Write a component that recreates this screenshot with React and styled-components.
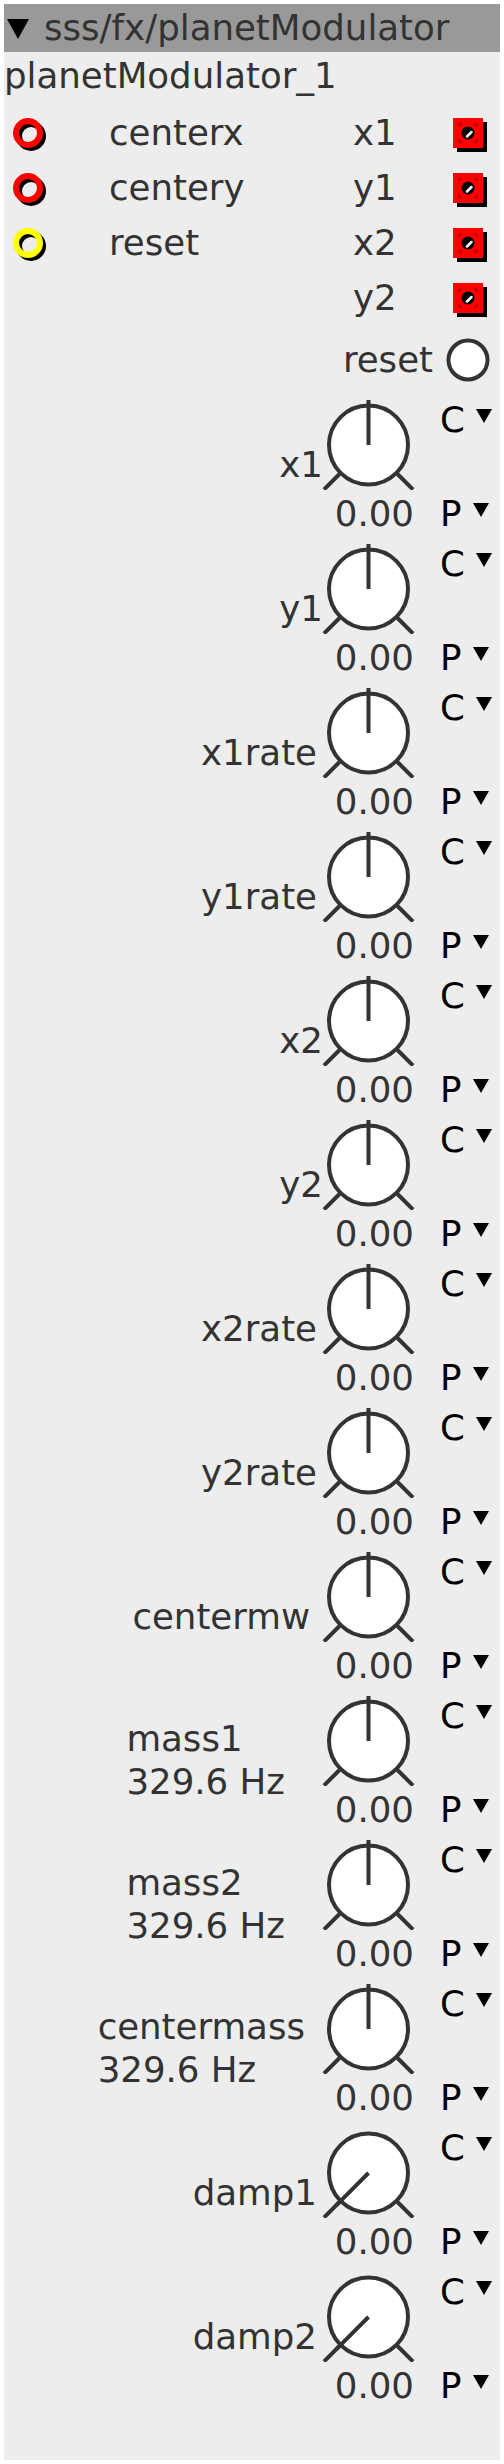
import React from "react";
import styled, { createGlobalStyle } from "styled-components";

const GlobalStyle = createGlobalStyle`
	body {
		margin: 4px;
		background: #ffffff;
		font-family: "DejaVu Sans", "Liberation Sans", sans-serif;
	}
`;

// Object panel
const Panel = styled.div`
	width: 496px;
	background: #ededed;
	color: #333333;
	font-size: 35.6px;
	padding-bottom: 44px;
`;

const Header = styled.div`
	height: 48px;
	display: flex;
	align-items: center;
	padding-left: 3px;
	background: #999999;
	line-height: 48px;
	white-space: nowrap;
`;

const Collapse = styled.svg`
	flex: none;
	margin-right: 15px;
`;

const InstanceName = styled.div`
	height: 48px;
	line-height: 48px;
	white-space: nowrap;
`;

// Inlets / outlets
const IoList = styled.div`
	padding-top: 5px;
`;

const IoRow = styled.div`
	display: grid;
	grid-template-columns: 96px 244px 100px 40px;
	align-items: center;
	height: 55px;
	padding-left: 9px;
	line-height: 40px;
`;

const JackIcon = styled.svg`
	display: block;
	margin-top: ${(p) => p.$drop}px;
`;

const ResetRow = styled.div`
	display: flex;
	justify-content: flex-end;
	align-items: center;
	gap: 13px;
	height: 70px;
	padding-right: 10px;
	line-height: 40px;
`;

// Knob rows
const KnobList = styled.div`
	padding-top: 5px;
`;

const KnobRow = styled.div`
	display: grid;
	grid-template-columns: 1fr 91px 78px;
	grid-template-rows: 90px 48px;
	padding: 0 8px 6px 0;
`;

const KnobLabel = styled.div`
	grid-column: 1;
	grid-row: 1 / 3;
	align-self: center;
	justify-self: end;
	padding: 0 ${(p) => p.$pad}px 10px 0;
	line-height: 43px;
	white-space: pre;
`;

const KnobSvg = styled.svg`
	grid-column: 2;
	grid-row: 1;
	display: block;
`;

const Value = styled.div`
	grid-column: 2;
	grid-row: 2;
	text-align: right;
	line-height: 48px;
`;

const Mode = styled.div`
	grid-column: 3;
	grid-row: ${(p) => p.$row};
	padding-left: 26px;
	color: #000000;
	line-height: ${(p) => (p.$row === 1 ? 40 : 48)}px;
	white-space: nowrap;
`;

const Caret = styled.svg`
	vertical-align: 9px;
`;

const Inlet = ({ color }) => (
	<JackIcon $drop={6} width="36" height="36" viewBox="0 0 36 36">
		<circle cx="18" cy="18" r="12" fill="none" stroke="#000" strokeWidth="6" />
		<circle cx="15" cy="15" r="12" fill="none" stroke={color} strokeWidth="6" />
	</JackIcon>
);

const Outlet = () => (
	<JackIcon $drop={4} width="34" height="34" viewBox="0 0 34 34">
		<rect x="4" y="4" width="30" height="30" fill="#000" />
		<rect x="0" y="0" width="30" height="30" fill="#ff0000" />
		<path
			d="M6 9V6h3M21 6h3v3M6 21v3h3M24 21v3h-3"
			fill="none"
			stroke="#7a0000"
			strokeWidth="1"
		/>
		<circle cx="15" cy="15" r="6.5" fill="#000" />
		<line x1="14" y1="18.5" x2="18.5" y2="14" stroke="#fff" strokeWidth="2.5" strokeLinecap="round" />
	</JackIcon>
);

const Knob = ({ angle }) => {
	const rad = (angle * Math.PI) / 180;
	const cx = 45.5;
	const cy = 45;
	const tick = (a, r) => {
		const t = (a * Math.PI) / 180;
		return [cx + r * Math.sin(t), cy - r * Math.cos(t)];
	};
	const [l1x, l1y] = tick(-135, 41);
	const [l2x, l2y] = tick(-135, 63);
	const [r1x, r1y] = tick(135, 41);
	const [r2x, r2y] = tick(135, 63);
	return (
		<KnobSvg width="91" height="90" viewBox="0 0 91 90">
			<line x1={l1x} y1={l1y} x2={l2x} y2={l2y} stroke="#333" strokeWidth="4" />
			<line x1={r1x} y1={r1y} x2={r2x} y2={r2y} stroke="#333" strokeWidth="4" />
			<circle cx={cx} cy={cy} r="39.5" fill="#fff" stroke="#333" strokeWidth="4" />
			<line
				x1={cx}
				y1={cy}
				x2={cx + 45 * Math.sin(rad)}
				y2={cy - 45 * Math.cos(rad)}
				stroke="#333"
				strokeWidth="4"
			/>
		</KnobSvg>
	);
};

const Dropdown = ({ letter, row }) => (
	<Mode $row={row}>
		{letter}{" "}
		<Caret width="16" height="14" viewBox="0 0 16 14">
			<polygon points="0,0 16,0 8,14" fill="#000" />
		</Caret>
	</Mode>
);

const ioRows = [
	{ inlet: "centerx", color: "#ff0000", outlet: "x1" },
	{ inlet: "centery", color: "#ff0000", outlet: "y1" },
	{ inlet: "reset", color: "#ffff00", outlet: "x2" },
	{ outlet: "y2" },
];

const knobs = [
	{ label: "x1", pad: 0, angle: 0 },
	{ label: "y1", pad: 0, angle: 0 },
	{ label: "x1rate", pad: 6, angle: 0 },
	{ label: "y1rate", pad: 6, angle: 0 },
	{ label: "x2", pad: 0, angle: 0 },
	{ label: "y2", pad: 0, angle: 0 },
	{ label: "x2rate", pad: 6, angle: 0 },
	{ label: "y2rate", pad: 6, angle: 0 },
	{ label: "centermw", pad: 13, angle: 0 },
	{ label: "mass1\n329.6 Hz", pad: 38, angle: 0 },
	{ label: "mass2\n329.6 Hz", pad: 38, angle: 0 },
	{ label: "centermass\n329.6 Hz", pad: 18, angle: 0 },
	{ label: "damp1", pad: 6, angle: -135 },
	{ label: "damp2", pad: 6, angle: -135 },
];

const App = () => {
	return (
		<>
			<GlobalStyle />
			<Panel>
				<Header>
					<Collapse width="22" height="21" viewBox="0 0 22 21">
						<polygon points="0,1 22,1 11,21" fill="#000" />
					</Collapse>
					sss/fx/planetModulator
				</Header>
				<InstanceName>planetModulator_1</InstanceName>

				<IoList>
					{ioRows.map((r) => (
						<IoRow key={r.outlet}>
							<div>{r.inlet && <Inlet color={r.color} />}</div>
							<div>{r.inlet}</div>
							<div>{r.outlet}</div>
							<Outlet />
						</IoRow>
					))}
				</IoList>

				<ResetRow>
					<span>reset</span>
					<svg width="44" height="44" viewBox="0 0 44 44">
						<circle cx="22" cy="22" r="19.5" fill="#fff" stroke="#333" strokeWidth="4" />
					</svg>
				</ResetRow>

				<KnobList>
					{knobs.map((k) => (
						<KnobRow key={k.label}>
							<KnobLabel $pad={k.pad}>{k.label}</KnobLabel>
							<Knob angle={k.angle} />
							<Dropdown letter="C" row={1} />
							<Value>0.00</Value>
							<Dropdown letter="P" row={2} />
						</KnobRow>
					))}
				</KnobList>
			</Panel>
		</>
	);
};

export default App;
